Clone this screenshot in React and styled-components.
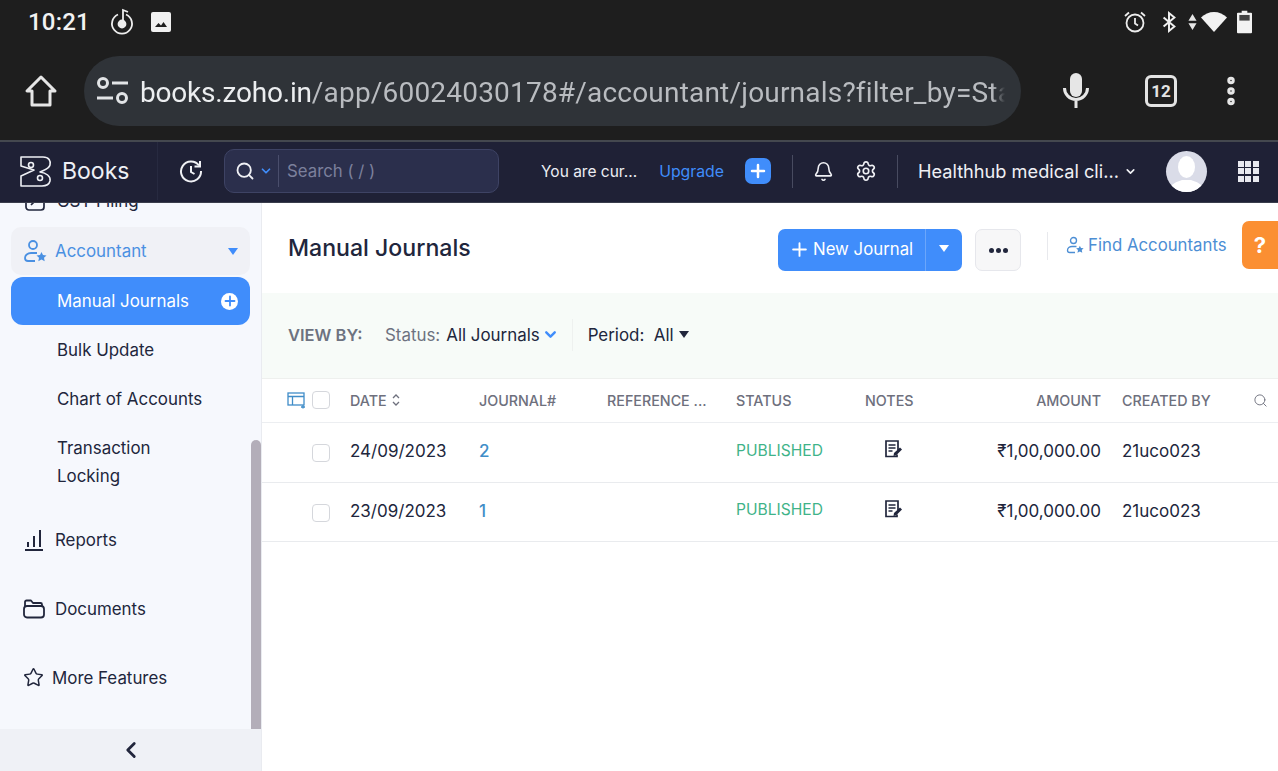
import React from 'react';
import styled, { createGlobalStyle } from 'styled-components';
import {
  Bell,
  ChevronDown,
  ChevronLeft,
  MoreVertical,
  Search,
  Settings,
  Star,
} from 'lucide-react';

const GlobalStyle = createGlobalStyle`
  html, body {
    margin: 0;
    padding: 0;
    width: 1278px;
    height: 771px;
    overflow: hidden;
    background: #fff;
    font-family: Inter, "Liberation Sans", sans-serif;
  }
  * { box-sizing: border-box; }
`;

const Page = styled.div`
  width: 1278px;
  height: 771px;
  display: flex;
  flex-direction: column;
  overflow: hidden;
`;

/* android + chrome part */
const Chrome = styled.div`
  height: 140px;
  background: #1e1e1e;
  color: #e6e6e6;
  font-family: Roboto, sans-serif;
`;

const StatusBar = styled.div`
  height: 44px;
  padding: 0 26px 0 28px;
  display: flex;
  align-items: center;
`;

const Clock = styled.span`
  font-size: 24px;
  font-weight: 500;
  color: #f2f2f2;
  width: 82px;
  letter-spacing: 0.2px;
`;

const StatusIcons = styled.div`
  margin-left: auto;
  display: flex;
  align-items: center;
`;

const Slot = styled.span`
  display: flex;
  margin-left: ${p => p.$left || 0}px;
`;

const UrlRow = styled.div`
  height: 96px;
  display: flex;
  align-items: flex-start;
  padding: 12px 0 0 24px;
`;

const HomeButton = styled.div`
  width: 60px;
  height: 70px;
  display: flex;
  align-items: center;
`;

const UrlPill = styled.div`
  width: 937px;
  height: 70px;
  border-radius: 35px;
  background: #2f3338;
  display: flex;
  align-items: center;
  padding-left: 12px;
  gap: 10px;
`;

const UrlText = styled.div`
  width: 865px;
  padding-top: 2px;
  overflow: hidden;
  white-space: nowrap;
  font-size: 28px;
  color: #b9bcc0;
  letter-spacing: 0.2px;
  mask-image: linear-gradient(to right, #000 98.5%, transparent);
  b {
    font-weight: 400;
    color: #eceef0;
    letter-spacing: -0.2px;
  }
`;

const BrowserActions = styled.div`
  flex: 1;
  height: 70px;
  display: flex;
  align-items: center;
  padding-left: 42px;
`;

const TabCount = styled.div`
  width: 32px;
  height: 32px;
  margin-left: 56px;
  margin-right: 36px;
  border: 3px solid #e3e3e3;
  border-radius: 6px;
  display: flex;
  align-items: center;
  justify-content: center;
  font-size: 17px;
  font-weight: 700;
  color: #e3e3e3;
`;

/* zoho nav */
const TopNav = styled.header`
  height: 63px;
  padding-bottom: 2px;
  background: #1f2136;
  border-top: 2px solid #44484f;
  border-bottom: 1px solid #3a3d4c;
  display: flex;
  align-items: center;
  color: #f0f1f5;
  position: relative;
  z-index: 2;
`;

const Brand = styled.div`
  width: 158px;
  height: 100%;
  padding-left: 20px;
  display: flex;
  align-items: center;
  gap: 10px;
  font-size: 23px;
  border-right: 1px solid #272a40;
  color: #eef0f5;
`;

const RecentButton = styled.div`
  width: 66px;
  display: flex;
  padding-left: 21px;
`;

const SearchBox = styled.div`
  width: 275px;
  height: 44px;
  border-radius: 10px;
  border: 1px solid #3e4364;
  background: #2b2f4c;
  display: flex;
  align-items: center;
  padding-left: 10px;
`;

const SearchDivider = styled.span`
  width: 1px;
  height: 32px;
  background: #4a4e6c;
  margin: 0 8px 0 5px;
`;

const Placeholder = styled.span`
  font-size: 16.8px;
  color: #7c809c;
`;

const TrialText = styled.span`
  margin-left: 42px;
  font-size: 15.5px;
  font-weight: 400;
  color: #eceef3;
`;

const UpgradeLink = styled.span`
  margin-left: 22px;
  font-size: 15.8px;
  color: #408dfb;
`;

const QuickAdd = styled.span`
  width: 26px;
  height: 26px;
  margin-left: 21px;
  border-radius: 7px;
  background: #408dfb;
  display: flex;
  align-items: center;
  justify-content: center;
`;

const NavDivider = styled.span`
  width: 1px;
  height: 33px;
  background: #484b60;
  margin-left: ${p => p.$left}px;
`;

const OrgName = styled.span`
  margin-left: 20px;
  font-size: 18.2px;
  white-space: nowrap;
  color: #eff0f4;
`;

const Avatar = styled.div`
  width: 41px;
  height: 41px;
  margin-left: 29px;
  border-radius: 50%;
  background: #dadce8;
  overflow: hidden;
`;

const AppGrid = styled.div`
  margin-left: 31px;
  display: grid;
  grid-template-columns: repeat(3, 6px);
  grid-auto-rows: 6px;
  gap: 1.5px;
  span {
    background: #e8e9ef;
  }
`;

const Body = styled.div`
  flex: 1;
  display: flex;
  min-height: 0;
`;

/* sidebar */
const Sidebar = styled.aside`
  width: 262px;
  flex: none;
  background: #f6f8fd;
  border-right: 1px solid #e9ebf0;
  display: flex;
  flex-direction: column;
  position: relative;
  overflow: hidden;
`;

const SideList = styled.nav`
  flex: 1;
  min-height: 0;
  margin: -26px 0 0 11px;
  width: 239px;
`;

const SideRow = styled.div`
  height: ${p => p.$h || 69}px;
  margin-top: ${p => p.$top || 0}px;
  display: flex;
  align-items: center;
  gap: ${p => p.$gap || 10}px;
  padding-left: ${p => p.$pad || 12}px;
  font-size: 16.9px;
  color: #21263c;
`;

const ActiveParent = styled(SideRow)`
  background: #f0f1f6;
  border-radius: 10px;
  color: #4a90e2;
  padding-right: 12px;
`;

const Caret = styled.span`
  margin-left: ${p => (p.$auto ? 'auto' : `${p.$left || 0}px`)};
  width: 0;
  height: 0;
  border-left: 5.5px solid transparent;
  border-right: 5.5px solid transparent;
  border-top: 7px solid ${p => p.$color || '#408dfb'};
`;

const SubItem = styled.div`
  min-height: 49px;
  margin-top: ${p => p.$top || 0}px;
  padding: 10px 40px 10px 46px;
  display: flex;
  align-items: center;
  font-size: 16.9px;
  line-height: 28px;
  color: #21263c;
`;

const ActiveSubItem = styled(SubItem)`
  min-height: 48px;
  padding-right: 12px;
  border-radius: 12px;
  background: #408dfb;
  color: #fff;
  justify-content: space-between;
`;

const PlusDot = styled.span`
  width: 17px;
  height: 17px;
  border-radius: 50%;
  background: #fff;
  display: flex;
  align-items: center;
  justify-content: center;
`;

const Scrollbar = styled.div`
  position: absolute;
  left: 251px;
  top: 237px;
  bottom: 42px;
  width: 10px;
  border-radius: 5px 5px 0 0;
  background: #b3aeb9;
`;

const CollapseBar = styled.div`
  height: 42px;
  flex: none;
  background: #eff1f6;
  display: flex;
  align-items: center;
  justify-content: center;
`;

/* main */
const Main = styled.main`
  flex: 1;
  min-width: 0;
  overflow: hidden;
`;

const TitleBar = styled.div`
  height: 90px;
  padding-left: 26px;
  display: flex;
  align-items: flex-start;
`;

const Title = styled.h1`
  margin: 26px 0 0;
  width: 490px;
  flex: none;
  font-size: 23.1px;
  font-weight: 500;
  line-height: 38px;
  color: #21263c;
`;

const SplitButton = styled.div`
  margin-top: 26px;
  width: 184px;
  flex: none;
  height: 42px;
  border-radius: 7px;
  background: #408dfb;
  display: flex;
  color: #fff;
  font-size: 16.8px;
`;

const SplitMain = styled.div`
  width: 148px;
  display: flex;
  align-items: center;
  padding: 0 0 2px 13px;
  gap: 5px;
  border-right: 1px solid #6ba6fb;
`;

const SplitCaret = styled.div`
  flex: 1;
  padding-bottom: 4px;
  display: flex;
  align-items: center;
  justify-content: center;
`;

const MoreButton = styled.div`
  margin: 26px 0 0 13px;
  flex: none;
  width: 46px;
  height: 42px;
  border: 1px solid #e6e7ec;
  border-radius: 7px;
  background: #f7f7f8;
  display: flex;
  align-items: center;
  justify-content: center;
  gap: 2px;
  span {
    width: 5px;
    height: 5px;
    border-radius: 50%;
    background: #21263c;
  }
`;

const ActionDivider = styled.span`
  margin: 29px 0 0 26px;
  flex: none;
  width: 1px;
  height: 28px;
  background: #e8e9ed;
`;

const FindLink = styled.div`
  margin: 29px 0 0 18px;
  flex: none;
  display: flex;
  align-items: center;
  gap: 4px;
  height: 26px;
  font-size: 16.8px;
  white-space: nowrap;
  color: #4c8ed4;
`;

const HelpTab = styled.div`
  margin: 18px 0 0 15px;
  flex: none;
  width: 40px;
  height: 48px;
  border-radius: 7px 0 0 7px;
  background: #fb8f32;
  color: #fff;
  font-size: 22px;
  font-weight: 700;
  display: flex;
  align-items: center;
  padding-left: 12px;
`;

const FilterBar = styled.div`
  height: 86px;
  padding: 0 0 2px 26px;
  background: #f7fbf8;
  border-bottom: 1px solid #eef0ee;
  display: flex;
  align-items: center;
  font-size: 16.9px;
`;

const ViewBy = styled.span`
  width: 97px;
  font-size: 16.5px;
  font-weight: 600;
  color: #6d7280;
`;

const FilterLabel = styled.span`
  color: #6d7280;
  margin-right: 6px;
`;

const FilterValue = styled.span`
  color: #21263c;
`;

const FilterDivider = styled.span`
  width: 1px;
  height: 32px;
  margin: 0 15px 0 13px;
  background: #eef1ef;
`;

const Cols = '88px 129px 128px 129px 129px 128px 108px 132px 1fr';

const TableHead = styled.div`
  height: 44px;
  padding-bottom: 1px;
  display: grid;
  grid-template-columns: ${Cols};
  align-items: center;
  border-bottom: 1px solid #eceef1;
  font-size: 14.3px;
  font-weight: 500;
  color: #6e707d;
  white-space: nowrap;
`;

const Row = styled.div`
  height: ${p => p.$h}px;
  padding-bottom: 3px;
  display: grid;
  grid-template-columns: ${Cols};
  align-items: center;
  border-bottom: 1px solid #e9ebee;
  font-size: 17px;
  color: #21263c;
`;

const SelectCell = styled.div`
  display: flex;
  align-items: center;
  gap: 5px;
  padding-left: ${p => p.$pad}px;
  margin-top: ${p => p.$top || 0}px;
`;

const Check = styled.span`
  width: 18px;
  height: 18px;
  border: 1px solid #d5d7dc;
  border-radius: 4px;
  background: #fff;
`;

const Amount = styled.div`
  text-align: right;
`;

const Owner = styled.div`
  padding-left: 21px;
`;

const JournalLink = styled.span`
  color: #408dc8;
  font-weight: 500;
`;

const Published = styled.div`
  margin-top: -2px;
  color: #3fb389;
  font-size: 15.6px;
`;

const NotesCell = styled.div`
  padding-left: 20px;
  margin-top: -4px;
  display: flex;
`;

const HeadSearch = styled.div`
  padding-left: 20px;
  display: flex;
`;

const DateHead = styled.div`
  display: flex;
  align-items: center;
  gap: 5px;
`;

const BooksLogo = () => (
  <svg width="32" height="31" viewBox="0 0 32 31" fill="none" stroke="#eef0f5" strokeWidth="1.6" strokeLinejoin="round">
    <path d="M1 1h22c6 0 8 4 7 8-1 4-6 5-10 7 6 1 11 4 10 9-1 4-4 5-8 5H1V20l13-6L1 10z" />
    <circle cx="11" cy="9" r="2.500" />
    <circle cx="20" cy="22" r="2.500" />
  </svg>
);

const SpinIcon = () => (
  <svg width="24" height="28" viewBox="0 0 24 28" fill="none" stroke="#ededed" strokeWidth="1.800">
    <path d="M8 6.500a10 10 0 1 0 8 0" />
    <circle cx="12" cy="16" r="3.500" fill="#ededed" />
    <path d="M13 16V2l5 2" />
  </svg>
);

const PhotoIcon = () => (
  <svg width="22" height="22" viewBox="0 0 22 22">
    <rect x="1" y="1" width="20" height="20" rx="2" fill="#f0f0f0" />
    <path d="M5 16l3.500-4 2.500 2.500 2.500-3.500L17 16z" fill="#1e1e1e" />
  </svg>
);

const AlarmIcon = () => (
  <svg width="24" height="24" viewBox="0 0 24 24" fill="none" stroke="#ededed" strokeWidth="1.800">
    <circle cx="12" cy="13" r="8.500" />
    <path d="M12 8v5.500l3 2M2 6l4-3.500M22 6l-4-3.500" />
  </svg>
);

const BluetoothIcon = () => (
  <svg width="18" height="24" viewBox="0 0 20 24" fill="none" stroke="#f0f0f0" strokeWidth="2.200">
    <path d="M4 7l12 10-6 5V2l6 5L4 17" />
  </svg>
);

const DataIcon = () => (
  <svg width="9" height="18" viewBox="0 0 10 18" fill="#e6e6e6">
    <path d="M5 0l4.500 7.500h-9zM5 18L.5 10.500h9z" />
  </svg>
);

const WifiIcon = () => (
  <svg width="26" height="22" viewBox="0 0 26 22" fill="#f2f2f2">
    <path d="M13 21L0 6.500C7-1 19-1 26 6.500z" />
  </svg>
);

const BatteryIcon = () => (
  <svg width="15" height="24" viewBox="0 0 16 24">
    <path d="M5 0h6v2h4a1 1 0 0 1 1 1v20a1 1 0 0 1-1 1H1a1 1 0 0 1-1-1V3a1 1 0 0 1 1-1h4z" fill="#f2f2f2" />
    <rect x="2.500" y="4.500" width="11" height="6" fill="#444" />
  </svg>
);

const HomeIcon = () => (
  <svg width="34" height="34" viewBox="0 0 34 34" fill="none" stroke="#e6e6e6" strokeWidth="3" strokeLinejoin="round">
    <path d="M17 3L3 17h5v14h18V17h5z" />
  </svg>
);

const TuneIcon = () => (
  <svg width="34" height="30" viewBox="0 0 34 30" fill="none" stroke="#e2e4e6" strokeWidth="3">
    <circle cx="7" cy="7" r="4.500" />
    <path d="M16 7h16M1 22h16" />
    <circle cx="26" cy="22" r="4.500" />
  </svg>
);

const MicIcon = () => (
  <svg width="26" height="36" viewBox="0 0 26 36" fill="none">
    <rect x="7" y="0" width="12" height="24" rx="6" fill="#e6e6e6" />
    <path d="M1.500 15a11.500 11.500 0 0 0 23 0M13 26v9" stroke="#e6e6e6" strokeWidth="3" />
  </svg>
);

const HistoryIcon = () => (
  <svg width="24" height="24" viewBox="0 0 24 24" fill="none" stroke="#f0f1f5" strokeWidth="2">
    <path d="M20 6.500A10 10 0 1 0 22 12" />
    <path d="M21 2v5.500h-5.500M12 7v6l3.500 2" />
  </svg>
);

const PersonStar = ({ size = 24, color = '#4a90e2' }) => (
  <svg width={size} height={size} viewBox="0 0 24 24" fill="none" stroke={color} strokeWidth="1.800">
    <circle cx="10" cy="6" r="4" />
    <path d="M14 14H8a6 5 0 0 0-6 5v0a3 3 0 0 0 3 3h7" />
    <path d="M18.500 13l1.500 3 3.500.4-2.500 2.400.7 3.400-3.200-1.700-3.200 1.700.7-3.400-2.500-2.400 3.500-.4z" fill={color} stroke="none" />
  </svg>
);

const FilingIcon = () => (
  <svg width="20" height="20" viewBox="0 0 20 20" fill="none" stroke="#21263c" strokeWidth="1.700">
    <rect x="1" y="1" width="18" height="18" rx="3" />
    <path d="M6 14l8-8M11 6h3v3" />
  </svg>
);

const ReportsIcon = () => (
  <svg width="20" height="22" viewBox="0 0 20 22" fill="none" stroke="#21263c" strokeWidth="2">
    <path d="M1 21h18M4 13v5M10 7v11M16 1v17" />
  </svg>
);

const FolderIcon = () => (
  <svg width="22" height="20" viewBox="0 0 22 20" fill="none" stroke="#21263c" strokeWidth="1.800" strokeLinejoin="round">
    <path d="M2 7V3a1.500 1.500 0 0 1 1.500-1.500H8l2 2.500h7.500A1.500 1.500 0 0 1 19 5.500V7" />
    <rect x="1" y="7" width="20" height="11.500" rx="3" />
  </svg>
);

const ColumnsIcon = () => (
  <svg width="20" height="17" viewBox="0 0 20 17" fill="none" stroke="#408dc8" strokeWidth="1.300">
    <rect x="1" y="1" width="16" height="12" />
    <path d="M1 4.500h16M5.500 4.500V13M16 13v3.500M14 15h4" />
  </svg>
);

const SortIcon = () => (
  <svg width="8" height="14" viewBox="0 0 8 14" fill="none" stroke="#6e707d" strokeWidth="1.300">
    <path d="M1 5l3-3 3 3M1 9l3 3 3-3" />
  </svg>
);

const NoteIcon = () => (
  <svg width="18" height="18" viewBox="0 0 18 18" fill="none" stroke="#21263c" strokeWidth="1.700">
    <path d="M12 14.500v2H1V1h12v9" />
    <path d="M3.500 5h7M3.500 8h7M3.500 11h4" />
    <path d="M8.500 16l.5-3 6-5.500 2 2-6 6z" fill="#21263c" stroke="none" />
  </svg>
);

const AvatarFigure = () => (
  <svg width="41" height="41" viewBox="0 0 41 41">
    <ellipse cx="20.500" cy="16" rx="8.500" ry="11" fill="#fff" />
    <path d="M3 41c1-9 8-10 13-12h9c5 2 12 3 13 12z" fill="#fff" />
  </svg>
);

const PlusIcon = ({ size = 16, color = '#fff', weight = 2.500 }) => (
  <svg width={size} height={size} viewBox="0 0 16 16" stroke={color} strokeWidth={weight} strokeLinecap="round">
    <path d="M8 2v12M2 8h12" />
  </svg>
);

const headers = ['JOURNAL#', 'REFERENCE ...', 'STATUS', 'NOTES'];

const journals = [
  { date: '24/09/2023', number: '2', height: 60 },
  { date: '23/09/2023', number: '1', height: 59 },
];

const App = () => (
  <Page>
    <GlobalStyle />
    <Chrome>
      <StatusBar>
        <Clock>10:21</Clock>
        <SpinIcon />
        <Slot $left={16}>
          <PhotoIcon />
        </Slot>
        <StatusIcons>
          <AlarmIcon />
          <Slot $left={13}>
            <BluetoothIcon />
          </Slot>
          <Slot $left={10}>
            <DataIcon />
          </Slot>
          <Slot $left={4}>
            <WifiIcon />
          </Slot>
          <Slot $left={10}>
            <BatteryIcon />
          </Slot>
        </StatusIcons>
      </StatusBar>
      <UrlRow>
        <HomeButton>
          <HomeIcon />
        </HomeButton>
        <UrlPill>
          <TuneIcon />
          <UrlText>
            <b>books.zoho.in</b>/app/60024030178#/accountant/journals?filter_by=Status
          </UrlText>
        </UrlPill>
        <BrowserActions>
          <MicIcon />
          <TabCount>12</TabCount>
          <MoreVertical size={36} strokeWidth={3} color="#e6e6e6" />
        </BrowserActions>
      </UrlRow>
    </Chrome>

    <TopNav>
      <Brand>
        <BooksLogo />
        Books
      </Brand>
      <RecentButton>
        <HistoryIcon />
      </RecentButton>
      <SearchBox>
        <Search size={20} strokeWidth={2.2} color="#f0f1f5" />
        <Slot $left={4}>
          <ChevronDown size={14} strokeWidth={3} color="#408dfb" />
        </Slot>
        <SearchDivider />
        <Placeholder>Search ( / )</Placeholder>
      </SearchBox>
      <TrialText>You are cur...</TrialText>
      <UpgradeLink>Upgrade</UpgradeLink>
      <QuickAdd>
        <PlusIcon />
      </QuickAdd>
      <NavDivider $left={21} />
      <Slot $left={20}>
        <Bell size={21} strokeWidth={1.8} />
      </Slot>
      <Slot $left={21}>
        <Settings size={22} strokeWidth={1.8} />
      </Slot>
      <NavDivider $left={20} />
      <OrgName>Healthhub medical cli...</OrgName>
      <Slot $left={5}>
        <ChevronDown size={13} strokeWidth={3} />
      </Slot>
      <Avatar>
        <AvatarFigure />
      </Avatar>
      <AppGrid>
        {Array.from({ length: 9 }, (_, i) => (
          <span key={i} />
        ))}
      </AppGrid>
    </TopNav>

    <Body>
      <Sidebar>
        <SideList>
          <SideRow $h={47} $pad={14} $gap={12}>
            <FilingIcon />
            GST Filing
          </SideRow>
          <ActiveParent $h={48} $gap={8} $top={3}>
            <PersonStar />
            Accountant
            <Caret $auto />
          </ActiveParent>
          <ActiveSubItem $top={2}>
            Manual Journals
            <PlusDot>
              <PlusIcon size={12} color="#408dfb" weight={2.4} />
            </PlusDot>
          </ActiveSubItem>
          <SubItem>Bulk Update</SubItem>
          <SubItem>Chart of Accounts</SubItem>
          <SubItem $top={1}>Transaction Locking</SubItem>
          <SideRow $pad={13} $gap={11} $top={5}>
            <ReportsIcon />
            Reports
          </SideRow>
          <SideRow>
            <FolderIcon />
            Documents
          </SideRow>
          <SideRow $gap={8}>
            <Star size={21} strokeWidth={1.7} />
            More Features
          </SideRow>
        </SideList>
        <Scrollbar />
        <CollapseBar>
          <ChevronLeft size={26} strokeWidth={2.6} color="#21263c" />
        </CollapseBar>
      </Sidebar>

      <Main>
        <TitleBar>
          <Title>Manual Journals</Title>
          <SplitButton>
            <SplitMain>
              <PlusIcon size={17} weight={1.8} />
              New Journal
            </SplitMain>
            <SplitCaret>
              <Caret $color="#fff" />
            </SplitCaret>
          </SplitButton>
          <MoreButton>
            <span />
            <span />
            <span />
          </MoreButton>
          <ActionDivider />
          <FindLink>
            <PersonStar size={18} color="#4c8ed4" />
            Find Accountants
          </FindLink>
          <HelpTab>?</HelpTab>
        </TitleBar>

        <FilterBar>
          <ViewBy>VIEW BY:</ViewBy>
          <FilterLabel>Status:</FilterLabel>
          <FilterValue>All Journals</FilterValue>
          <Slot $left={2}>
            <ChevronDown size={17} strokeWidth={3.4} color="#408dfb" />
          </Slot>
          <FilterDivider />
          <FilterValue>Period:&nbsp; All</FilterValue>
          <Caret $color="#21263c" $left={5} />
        </FilterBar>

        <TableHead>
          <SelectCell $pad={25}>
            <ColumnsIcon />
            <Check />
          </SelectCell>
          <DateHead>
            DATE
            <SortIcon />
          </DateHead>
          {headers.map(h => (
            <div key={h}>{h}</div>
          ))}
          <Amount>AMOUNT</Amount>
          <Owner>CREATED BY</Owner>
          <HeadSearch>
            <Search size={15} strokeWidth={1.5} color="#6e707d" />
          </HeadSearch>
        </TableHead>

        {journals.map(j => (
          <Row key={j.number} $h={j.height}>
            <SelectCell $pad={50} $top={4}>
              <Check />
            </SelectCell>
            <div>{j.date}</div>
            <div>
              <JournalLink>{j.number}</JournalLink>
            </div>
            <div />
            <Published>PUBLISHED</Published>
            <NotesCell>
              <NoteIcon />
            </NotesCell>
            <Amount>₹1,00,000.00</Amount>
            <Owner>21uco023</Owner>
            <div />
          </Row>
        ))}
      </Main>
    </Body>
  </Page>
);

export default App;
